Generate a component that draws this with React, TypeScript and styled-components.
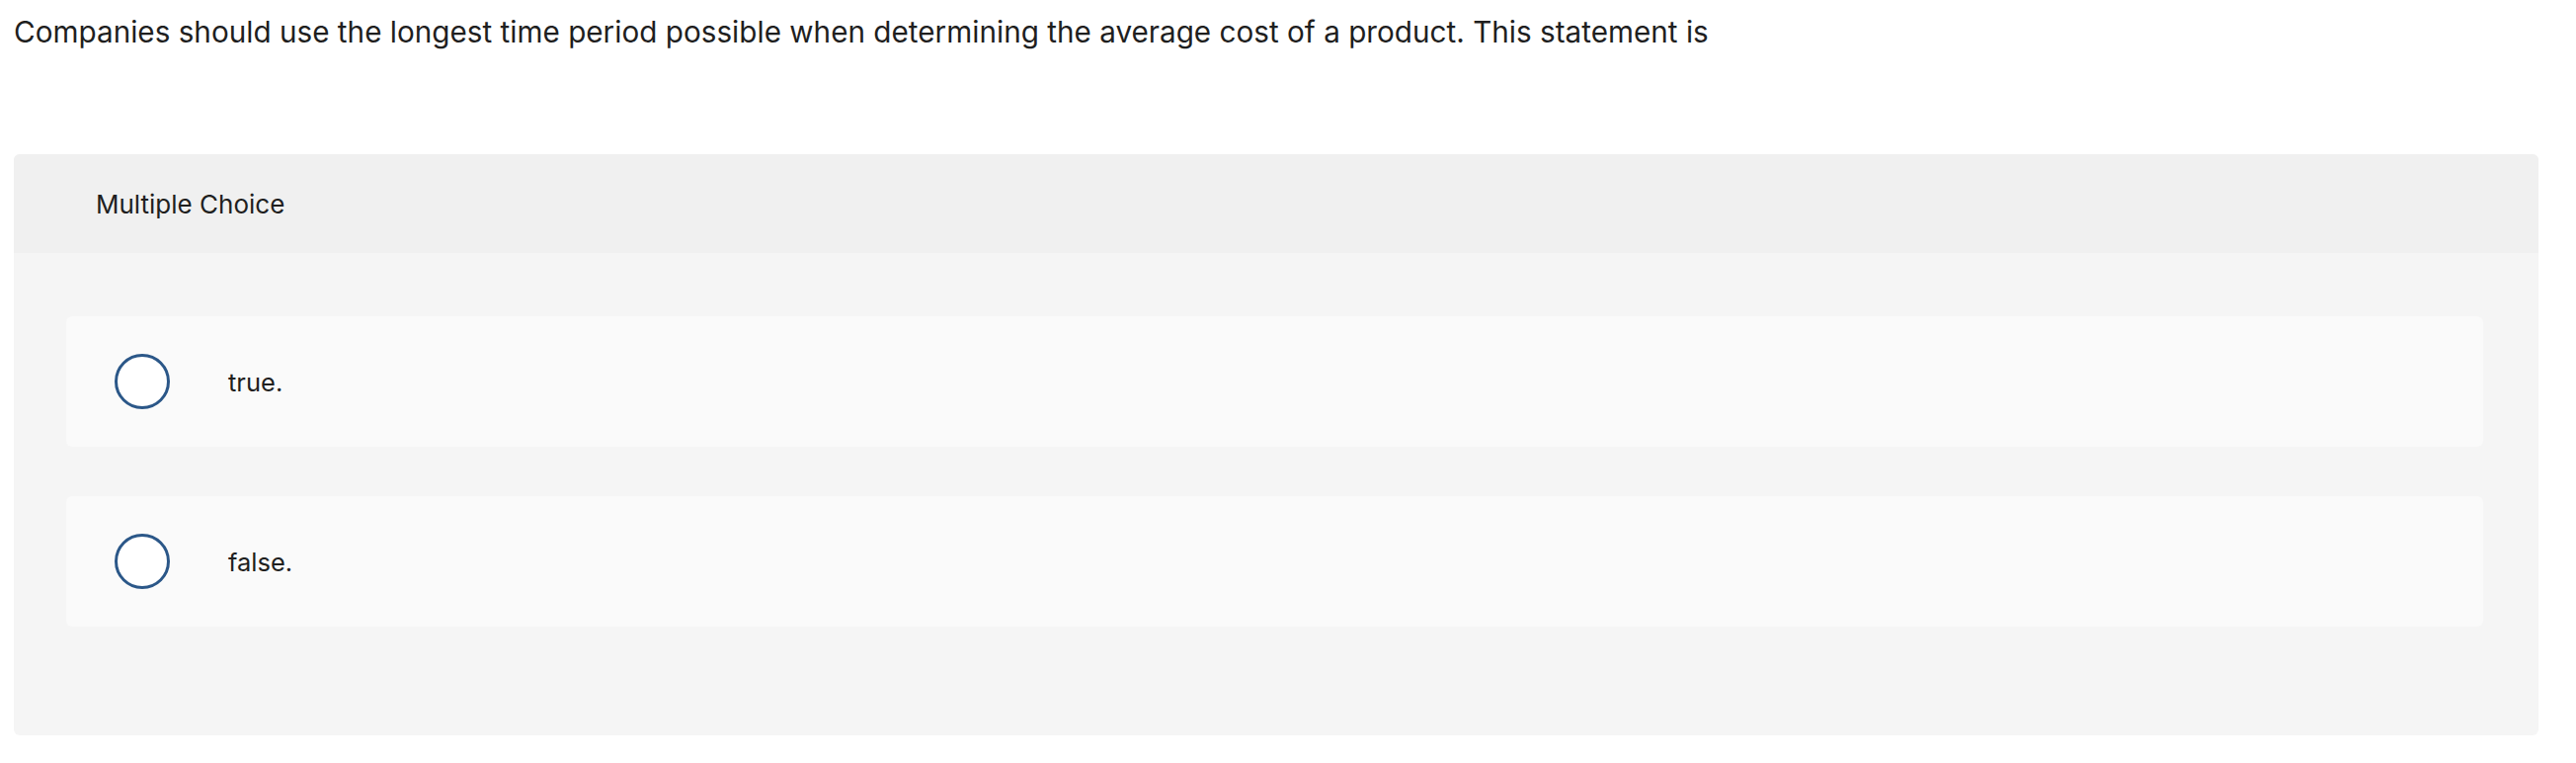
import React from "react";
import styled, { createGlobalStyle } from "styled-components";

const Global = createGlobalStyle`
  html, body { margin: 0; padding: 0; background: #fff; }
  body { font-family: "Inter", "Noto Sans", sans-serif; color: #212121; }
`;

const Page = styled.div`
  display: flex;
  flex-direction: column;
  padding: 15px 14px 0 14px;
  width: 2608px;
  box-sizing: border-box;
`;

const Prompt = styled.p`
  margin: 0;
  font-size: 29.7px;
  line-height: 34px;
  color: #1f1f1f;
`;

const Panel = styled.section`
  margin-top: 107px;
  width: 2556px;
  border-radius: 6px;
  overflow: hidden;
  background: #f5f5f5;
`;

const Header = styled.div`
  height: 100px;
  background: #f0f0f0;
  display: flex;
  align-items: center;
  padding-left: 83px;
  font-size: 26px;
  color: #1f1f1f;
`;

const Body = styled.div`
  display: flex;
  flex-direction: column;
  gap: 50px;
  padding: 64px 56px 110px 53px;
`;

const Option = styled.label`
  height: 132px;
  background: #fafafa;
  border-radius: 6px;
  display: flex;
  align-items: center;
  padding-left: 49px;
  cursor: pointer;
`;

const Radio = styled.span`
  width: 56px;
  height: 56px;
  box-sizing: border-box;
  border: 3px solid #2b5788;
  border-radius: 50%;
  background: #fff;
  flex: none;
`;

const OptionText = styled.span`
  margin-left: 59px;
  font-size: 25.5px;
  color: #1f1f1f;
`;

const options = ["true.", "false."];

export default function App() {
  return (
    <>
      <Global />
      <Page>
        <Prompt>
          Companies should use the longest time period possible when determining the average cost of a product. This statement is
        </Prompt>
        <Panel>
          <Header>Multiple Choice</Header>
          <Body>
            {options.map((o) => (
              <Option key={o}>
                <Radio />
                <OptionText>{o}</OptionText>
              </Option>
            ))}
          </Body>
        </Panel>
      </Page>
    </>
  );
}
